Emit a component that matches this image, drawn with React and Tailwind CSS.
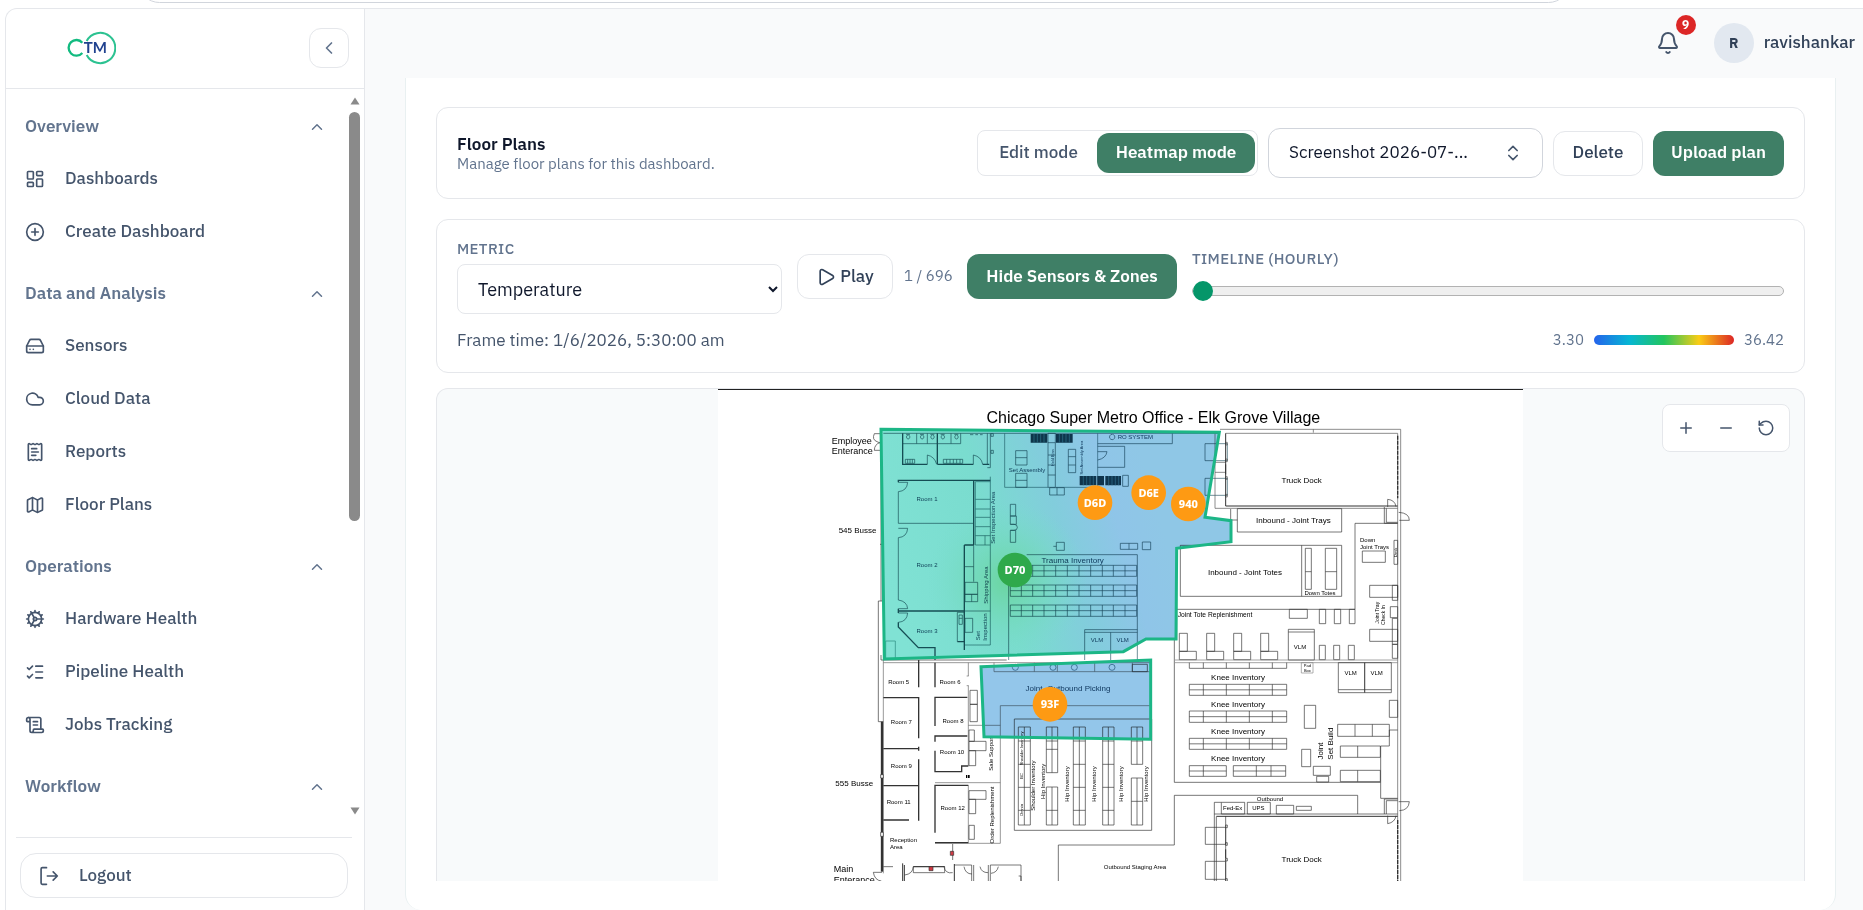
import {
  LayoutDashboard, CirclePlus, HardDrive, Cloud, ReceiptText, Map as MapIcon, Cog, ListChecks,
  ScrollText, ChevronUp, ChevronLeft, ChevronsUpDown, Bell, Play, Plus, Minus, RotateCcw,
} from "lucide-react";

const sections = [
  { title: "Overview", items: [["Dashboards", LayoutDashboard], ["Create Dashboard", CirclePlus]] },
  { title: "Data and Analysis", items: [["Sensors", HardDrive], ["Cloud Data", Cloud], ["Reports", ReceiptText], ["Floor Plans", MapIcon]] },
  { title: "Operations", items: [["Hardware Health", Cog], ["Pipeline Health", ListChecks], ["Jobs Tracking", ScrollText]] },
  { title: "Workflow", items: [] },
];

function Logo() {
  return (
    <svg viewBox="0 0 150 102" className="h-[34px] w-[50px]" role="img" aria-label="CTM">
      <g fill="none">
        <path d="M49 35A23.500 23.500 0 1 0 49 66" stroke="#12bb80" strokeWidth="7" />
        <path d="M62 30A45.500 45.500 0 1 1 62 72" stroke="#2cc291" strokeWidth="6" />
      </g>
      <text x="88" y="67" textAnchor="middle" fontFamily="Lato, sans-serif" fontSize="45" fontWeight="700" fill="#21428f">TM</text>
    </svg>
  );
}

function Sidebar() {
  return (
    <aside className="flex w-[360px] shrink-0 flex-col overflow-hidden rounded-tl-xl border border-b-0 border-gray-200 bg-white">
      <div className="flex h-20 shrink-0 items-center justify-between border-b border-gray-200 pr-[15px] pb-[2px] pl-[60px]">
        <Logo />
        <button type="button" aria-label="Collapse sidebar" className="flex size-10 items-center justify-center rounded-xl border border-gray-200 text-slate-500">
          <ChevronLeft size={20} strokeWidth={2} />
        </button>
      </div>
      <div className="flex min-h-0 flex-1">
        <nav className="flex min-w-0 flex-1 flex-col gap-[14px] overflow-hidden pt-[14px] pl-[19px]">
          {sections.map((s) => (
            <section key={s.title}>
              <button type="button" className="flex h-12 w-full items-center justify-between pr-[19px] text-[17px] font-semibold text-slate-500">
                {s.title}
                <ChevronUp size={18} strokeWidth={2} />
              </button>
              {s.items.length > 0 && (
                <ul className="mt-1 flex flex-col gap-[5px]">
                  {s.items.map(([label, Icon]) => (
                    <li key={label}>
                      <a href="#" className="flex h-12 items-center gap-5 text-[17px] font-medium text-slate-600">
                        <Icon size={20} strokeWidth={2} />
                        {label}
                      </a>
                    </li>
                  ))}
                </ul>
              )}
            </section>
          ))}
        </nav>
        <div className="flex w-[19px] shrink-0 flex-col items-center pt-2" aria-hidden="true">
          <svg viewBox="0 0 10 8" className="h-2 w-[10px]"><path d="M5 0.5 9.5 7.5H.5Z" fill="#8a8a8a" /></svg>
          <div className="mt-[7px] h-[409px] w-[11px] rounded-full bg-[#8a8a8a]" />
          <svg viewBox="0 0 10 8" className="mt-auto h-2 w-[10px]"><path d="M5 7.5 9.5.5H.5Z" fill="#8a8a8a" /></svg>
        </div>
      </div>
      <div className="mr-3 ml-[10px] mt-[22px] border-t border-gray-200 px-1 pt-[15px] pb-3">
        <button type="button" className="flex h-[45px] w-full items-center gap-5 rounded-2xl border border-gray-200 px-[18px] text-[17px] font-medium text-slate-600">
          <svg viewBox="0 0 24 24" className="size-5" fill="none" stroke="currentColor" strokeWidth="2" strokeLinecap="round" strokeLinejoin="round">
            <path d="M9 2H4a1.500 1.500 0 0 0-1.500 1.500v17A1.500 1.500 0 0 0 4 22h5M10 12h12M17 7l5 5-5 5" />
          </svg>
          Logout
        </button>
      </div>
    </aside>
  );
}

function TopBar() {
  return (
    <header className="flex h-[69px] shrink-0 items-center justify-end gap-[34px] pr-2 pb-[2px]">
      <button type="button" aria-label="Notifications, 9 unread" className="relative text-slate-600">
        <Bell size={24} strokeWidth={2} />
        <span className="absolute -top-4 -right-4 flex size-5 items-center justify-center rounded-full bg-[#dc2626] text-xs font-bold text-white">9</span>
      </button>
      <button type="button" className="flex items-center gap-[10px] text-[17px] font-medium text-slate-700">
        <span className="flex size-10 items-center justify-center rounded-full bg-slate-200 text-sm font-bold">R</span>
        ravishankar
      </button>
    </header>
  );
}

const outline = "h-[45px] rounded-xl border border-gray-200 bg-white text-[17px] font-medium text-slate-700";
const solid = "h-[45px] rounded-xl bg-[#3f7f66] text-[17px] font-semibold text-white";

function PlanHeader() {
  return (
    <section className="flex items-center justify-between rounded-xl border border-gray-200 px-5 py-5">
      <div className="pt-[2px]">
        <h1 className="text-[17px]/5 font-semibold text-slate-900">Floor Plans</h1>
        <p className="text-[15px]/5 text-slate-500">Manage floor plans for this dashboard.</p>
      </div>
      <div className="flex items-center gap-[10px]">
        <div className="flex rounded-lg border border-gray-200 p-[2px]">
          <button type="button" className="h-10 w-[117px] text-[17px] font-medium text-slate-600">Edit mode</button>
          <button type="button" className="h-10 w-[158px] rounded-xl bg-[#3f7f66] text-[17px] font-semibold text-white">Heatmap mode</button>
        </div>
        <div className="relative">
          <select aria-label="Floor plan" className="h-[50px] w-[275px] appearance-none rounded-xl border border-gray-300 bg-white pr-12 pl-5 text-[17px] text-slate-900">
            <option>Screenshot 2026-07-...</option>
          </select>
          <ChevronsUpDown size={20} strokeWidth={2} className="pointer-events-none absolute top-[15px] right-5 text-slate-600" />
        </div>
        <button type="button" className={outline + " w-[90px]"}>Delete</button>
        <button type="button" className={solid + " w-[131px]"}>Upload plan</button>
      </div>
    </section>
  );
}

function Controls() {
  return (
    <section className="mt-5 rounded-xl border border-gray-200 px-5 pt-[19px] pb-5">
      <div className="flex items-center gap-[15px]">
        <div className="flex w-[325px] flex-col gap-[5px]">
          <label htmlFor="metric" className="text-[15px]/5 font-medium tracking-wide text-slate-500">METRIC</label>
          <select id="metric" className="h-[50px] rounded-lg border border-gray-200 bg-white pl-4 text-lg text-slate-900">
            <option>Temperature</option>
          </select>
        </div>
        <button type="button" className={outline + " flex w-24 items-center justify-center gap-1"}>
          <Play size={20} strokeWidth={2} />
          Play
        </button>
        <span className="-mx-1 w-[52px] text-[15px] whitespace-nowrap text-slate-500">1 / 696</span>
        <button type="button" className={solid + " w-[210px]"}>Hide Sensors &amp; Zones</button>
        <div className="flex flex-1 flex-col gap-3 pb-1">
          <label htmlFor="timeline" className="text-[15px]/5 font-medium tracking-wide text-slate-500">TIMELINE (HOURLY)</label>
          <input
            id="timeline" type="range" min="1" max="696" defaultValue="1"
            className="h-5 w-full appearance-none bg-transparent [&::-webkit-slider-runnable-track]:h-[10px] [&::-webkit-slider-runnable-track]:rounded-full [&::-webkit-slider-runnable-track]:border [&::-webkit-slider-runnable-track]:border-[#b2b2b2] [&::-webkit-slider-runnable-track]:bg-[#efefef] [&::-webkit-slider-thumb]:-mt-[6px] [&::-webkit-slider-thumb]:size-5 [&::-webkit-slider-thumb]:appearance-none [&::-webkit-slider-thumb]:rounded-full [&::-webkit-slider-thumb]:bg-[#059669]"
          />
        </div>
      </div>
      <div className="mt-[14px] flex items-center justify-between">
        <p className="text-[17px]/6 text-slate-600">Frame time: 1/6/2026, 5:30:00 am</p>
        <div className="flex items-center gap-[10px] text-[15px] text-slate-500">
          3.30
          <div className="h-[10px] w-[140px] rounded-full bg-[linear-gradient(90deg,#2563eb,#06b6d4_25%,#22c55e_50%,#facc15_75%,#dc2626)]" />
          36.42
        </div>
      </div>
    </section>
  );
}

/* Floor plan: three drawing units to one pixel, in four quadrants. */
const rects = (list) => list.map(([x, y, w, h]) => `M${x} ${y}h${w}v${h}h${-w}z`).join("");
const shelf = (xs, y, h) =>
  `M${xs[0]} ${y}H${xs[xs.length - 1]}M${xs[0]} ${y + h / 2}H${xs[xs.length - 1]}M${xs[0]} ${y + h}H${xs[xs.length - 1]}` +
  xs.map((x) => `M${x} ${y}v${h}`).join("");
const rack = (x, w, ys) =>
  `M${x} ${ys[0]}V${ys[ys.length - 1]}M${x + w / 2} ${ys[0]}V${ys[ys.length - 1]}M${x + w} ${ys[0]}V${ys[ys.length - 1]}` +
  ys.map((y) => `M${x} ${y}h${w}`).join("");

function T({ x, y, s = 18, mid, up, fill, children }) {
  return (
    <text x={x} y={y} fontSize={s} fill={fill} textAnchor={mid || up ? "middle" : "start"} transform={up ? `rotate(-90 ${x} ${y})` : undefined}>
      {children}
    </text>
  );
}

function TopLeft() {
  const cols = [571, 604, 638, 672, 707, 742, 777, 812, 847, 880, 915, 950];
  return (
    <g>
      <g stroke="#2a5866" fill="none" strokeWidth="2">
        <path d="M190 145H1200M248 176H422M290 145v31M322 145v31M393 145v31M422 145v31M502 145V238M511 145V248H502" />
        <path d="M322 238v-28q22 5 28 28M460 238v-28q24 5 28 28M450 149h10M466 149h8M480 149h8M513 146h7v8h-7zM513 196h7v9h-7z" />
        <path d="M256 223h28v12h-28zM263 223v12M270 223v12M277 223v12M370 223h58v12h-58zM380 223v12M390 223v12M400 223v12M410 223v12M420 223v12" />
        <path d="M258 148h12M264 150a5 6 0 1 0 1 0M300 148h12M306 150a5 6 0 1 0 1 0M331 148h12M337 150a5 6 0 1 0 1 0M362 148h12M368 150a5 6 0 1 0 1 0M403 148h12M409 150a5 6 0 1 0 1 0" />
        <path d="M511 275V780H433M466 290h45M466 343h45M466 372h45M466 397h45M466 425h45M466 452h45M466 480h45M495 452v28M466 290V480" stroke="#34707a" />
        <path d="M235 292h28q-2 26-28 28V415H461M235 430h28q-2 26-28 28V645q26 4 28 26H235M235 684h28q-2 26-28 28" />
        <path d="M461 480V590M433 545h28M435 592h38v36h-38zM435 628h38v22h-38zM455 628v22M412 682h21v88M412 682v88M417 690h10v28h-10zM417 700h10M435 700h23v42h-23zM433 678h78" />
        <path d="M197 768h29v55h-29z" stroke="#4f9a96" />
        <path d="M554 145V307H684M708 307H833V145" stroke="#40727f" />
        <path d={rects([[587, 197, 34, 43], [587, 265, 34, 42], [684, 145, 22, 162], [745, 193, 22, 70], [689, 308, 44, 22], [571, 358, 16, 35], [571, 393, 18, 25], [571, 436, 16, 36], [709, 472, 24, 24], [901, 475, 52, 18], [967, 471, 25, 23], [908, 271, 17, 33], [1155, 176, 67, 51], [1155, 280, 67, 51]])} />
        <path d="M587 218h34M587 286h34M684 173h22M684 210h22M684 240h22M684 270h22M745 215h22M745 240h22M711 308v22M571 418h11a10 9 0 0 1 0 18h-11M927 475v18M700 484h9" />
        <path d="M833 176H1057V145M833 184H914V247H833M833 200h28q-3 20-28 25M876 148a8 8 0 1 0 1 0" />
        <path d="M620 509H952V825M566 600V825" />
        <path d={shelf(cols, 541, 33) + shelf(cols, 600, 34) + shelf(cols, 660, 34)} />
        <path d="M794 825V734H952M794 742H952M872 742V825" />
        <path d="M248 145V238H322M352 145V238M352 238H460M488 238h20M235 286H511M235 284v8M461 284V480M433 480H461M433 480V795M235 678H433M235 712V726L295 788H345V825M412 770h21M235 671v13" strokeWidth="4" />
      </g>
      <g fill="#1d4a6a">
        <path d="M632 147h50v26h-50zM708 147h50v26h-50zM779 273h50v28h-50zM832 273h20v28h-20zM856 273h47v28h-47z" fill="#1a4356" />
        <path d="M642 147v26M652 147v26M662 147v26M672 147v26M718 147v26M728 147v26M738 147v26M748 147v26M790 273v28M800 273v28M810 273v28M820 273v28M866 273v28M876 273v28M886 273v28M896 273v28" stroke="#58919f" strokeWidth="2" />
        <T x={321} y={347} mid>Room 1</T>
        <T x={321} y={546} mid>Room 2</T>
        <T x={321} y={744} mid>Room 3</T>
        <T x={524} y={398} up>Set Inspection Area</T>
        <T x={504} y={600} up>Shipping Area</T>
        <T x={480} y={752} up>Set</T>
        <T x={500} y={726} up>Inspection</T>
        <T x={621} y={260} mid>Set Assembly</T>
        <T x={788} y={218} s={12} up>Set Assembly Area</T>
        <T x={703} y={218} s={12} up>Hold Bins</T>
        <T x={893} y={163}>RO SYSTEM</T>
        <T x={758} y={533} s={24} mid>Trauma Inventory</T>
        <T x={831} y={770} mid>VLM</T>
        <T x={908} y={770} mid>VLM</T>
      </g>
      <g fill="#000">
        <T x={1000} y={113} s={48} mid>Chicago Super Metro Office - Elk Grove Village</T>
        <T x={35} y={176} s={27}>Employee</T>
        <T x={35} y={207} s={27}>Enterance</T>
        <T x={56} y={443} s={24}>545 Busse</T>
      </g>
      <path d="M163 146h20M163 146q-8 18 8 24q8 3 10 5M181 172q-18 6-18 24h20M183 140V648M180 478h8M175 1010V648H190M175 1010h15M183 810V825H560" fill="none" stroke="#333" strokeWidth="2" />
    </g>
  );
}

function TopRight() {
  return (
    <g transform="translate(900 0)">
      <g fill="none" stroke="#333" strokeWidth="2">
        <path d="M300 133H842V1490M317 145H833V1490M580 133v10M285 145V370H833M285 232h32M285 262h32M317 172h5v8h-5zM317 222h5v8h-5zM317 275h5v8h-5zM317 328h5v8h-5z" stroke="#555" />
        <path d="M317 145V363H833M317 238v30" strokeWidth="3" />
        <path d="M833 152V340" strokeWidth="4" strokeDasharray="12 3" />
        <path d="M803 366V343q22 2 25 22M836 382q32 2 32 24h-30M793 366V415H833M799 370V412H833M705 415H833M705 415V673H170M332 372V405H352" />
        <path d={rects([[352, 371, 313, 70], [181, 481, 484, 153], [556, 490, 18, 123], [616, 490, 34, 123], [727, 498, 69, 34], [822, 466, 11, 72], [749, 601, 84, 36], [817, 601, 16, 45], [811, 665, 22, 33], [749, 733, 84, 36], [817, 700, 16, 78], [817, 778, 16, 42], [508, 673, 54, 27], [598, 673, 19, 43], [643, 673, 19, 43], [688, 673, 17, 43], [598, 781, 18, 43], [641, 781, 18, 43], [685, 781, 18, 43], [505, 733, 78, 92], [178, 745, 24, 54], [178, 799, 51, 25], [260, 745, 24, 54], [260, 799, 51, 25], [341, 745, 24, 54], [341, 799, 51, 25], [422, 745, 24, 54], [422, 799, 51, 25]])} />
        <path d="M545 481V634M556 560h18M616 560h34M505 741h78M163 765V1192M170 490V765" />
        <path d="M165 825H833M165 833H833" stroke="#777" />
      </g>
      <T x={545} y={293} s={24} mid>Truck Dock</T>
      <T x={520} y={415} s={24} mid>Inbound - Joint Trays</T>
      <T x={375} y={569} s={24} mid>Inbound - Joint Totes</T>
      <T x={600} y={631} mid>Down Totes</T>
      <T x={720} y={472}>Down</T>
      <T x={720} y={492}>Joint Trays</T>
      <T x={776} y={683} s={15} up>Joint Tray</T>
      <T x={795} y={690} s={15} up>Check In</T>
      <T x={831} y={502} s={12} up>Desk</T>
      <T x={173} y={697} s={20}>Joint Tote Replenishment</T>
      <T x={540} y={793} mid>VLM</T>
    </g>
  );
}

function BottomLeft() {
  return (
    <g transform="translate(0 765)">
      <g fill="none" stroke="#333" strokeWidth="2">
        <path d="M190 68H993M190 60V700M445 68V108M440 108h6M445 137V378M440 137h6M445 256H541M345 428H541M541 610V197H993M345 610H541M445 436V608M522 68V95H993M643 68v27M712 68v27M824 68v27M937 68v27" stroke="#666" />
        <path d="M583 237H995V571H583ZM715 723V615H1063M398 612V660" />
        <path d="M577 82a9 9 0 1 0 18 0a9 9 0 1 0-18 0M690 82a9 9 0 1 0 18 0a9 9 0 1 0-18 0M754 82a9 9 0 1 0 18 0a9 9 0 1 0-18 0M867 82a9 9 0 1 0 18 0a9 9 0 1 0-18 0" stroke="#33667f" />
        <path d={rects([[450, 151, 22, 42], [450, 193, 22, 52], [447, 270, 16, 34], [447, 304, 51, 28], [447, 332, 20, 45], [447, 452, 51, 26], [447, 478, 20, 43], [447, 556, 16, 42], [937, 73, 45, 22]])} />
        <path d={rack(595, 36, [261, 303, 373, 442, 511, 555]) + rack(679, 34, [261, 303, 328, 398]) + rack(679, 34, [441, 511, 555]) + rack(760, 36, [261, 303, 373, 442, 511, 555]) + rack(848, 34, [261, 303, 373, 442, 511, 555]) + rack(934, 34, [261, 303, 373]) + rack(934, 34, [414, 484, 555])} />
        <path d="M345 142V68M345 258V172H442M345 305V288H442M345 332V395H425V378H445M345 578V436H445M296 60V142M190 173H296V295M190 326H296M296 320v12M296 358V542M190 437H296M190 540h77M345 608h100" strokeWidth="4" stroke="#333" />
        <path d="M186 245V695" strokeWidth="7" />
        <path d="M182 404h8v10h-8zM182 577h8v12h-8z" fill="#fff" />
        <path d="M160 697h26M160 697q4 24 24 26M190 680h29M280 680h94v18h-94zM280 680q-2 22-26 25M372 680q4 22 26 18M432 680q4 22 24 22M403 675h52M455 675V723M461 675V723M480 680q4 18 24 18M505 675V723M511 675V723M535 680q-4 18-22 20M511 675h92V723M596 708h7v15" />
        <path d="M248 670V723M253 675V723M280 680h94M403 672V723" strokeWidth="3" />
        <path d="M327 680h12v12h-12zM391 634h10v12h-10z" stroke="#333" fill="#d13a44" />
      </g>
      <path d="M438 405h4v9h-4zM444 405h5v9h-5z" />
      <T x={236} y={133} mid>Room 5</T>
      <T x={244} y={253} mid>Room 7</T>
      <T x={244} y={384} mid>Room 9</T>
      <T x={236} y={492} mid>Room 11</T>
      <T x={390} y={133} mid>Room 6</T>
      <T x={399} y={248} mid>Room 8</T>
      <T x={396} y={343} mid>Room 10</T>
      <T x={398} y={511} mid>Room 12</T>
      <T x={210} y={606}>Reception</T>
      <T x={210} y={627}>Area</T>
      <T x={46} y={438} s={24}>555 Busse</T>
      <T x={41} y={696} s={27}>Main</T>
      <T x={41} y={728} s={27}>Enterance</T>
      <T x={520} y={340} up>Sale Support</T>
      <T x={521} y={525} up>Order Replenishment</T>
      <T x={610} y={325} s={12} up>Shoulder Inventory</T>
      <T x={610} y={408} s={12} up>BC</T>
      <T x={610} y={510} s={12} up>Omnia</T>
      <T x={645} y={437} up>Shoulder Inventory</T>
      <T x={675} y={424} up>Hip Inventory</T>
      <T x={748} y={432} up>Hip Inventory</T>
      <T x={827} y={432} up>Hip Inventory</T>
      <T x={909} y={432} up>Hip Inventory</T>
      <T x={983} y={432} up>Hip Inventory</T>
      <T x={744} y={153} s={24} fill="#1d4a6a" mid>Joint- Outbound Picking</T>
      <T x={945} y={687} mid>Outbound Staging Area</T>
    </g>
  );
}

function BottomRight() {
  const cols = [208, 250, 319, 388, 457, 500];
  return (
    <g transform="translate(900 765)">
      <g fill="none" stroke="#333" strokeWidth="2">
        <path d={shelf(cols, 133, 33) + shelf(cols, 213, 34) + shelf(cols, 295, 33) + shelf([208, 250, 319], 377, 32) + shelf([340, 409, 453, 497], 377, 32)} />
        <path d="M208 68v17H500V68M250 68v17M319 68v17M388 68v17M457 68v17M163 427H782M163 615V466H713V522M655 149h159M705 253v36M757 253v36M713 318v34M713 391v34" />
        <path d={rects([[655, 68, 79, 90], [734, 68, 80, 90], [553, 196, 34, 69], [545, 328, 27, 52], [580, 379, 51, 27], [590, 409, 36, 17], [808, 181, 25, 51], [653, 253, 155, 36], [661, 318, 120, 34], [661, 391, 120, 34], [304, 487, 70, 35], [382, 487, 69, 35], [469, 496, 52, 26], [529, 499, 45, 12], [256, 562, 61, 51], [256, 664, 61, 54], [317, 555, 5, 8], [317, 608, 5, 8], [317, 655, 5, 8], [317, 716, 5, 8]])} />
        <path d="M544 68h35v31h-35z" stroke="#888" />
        <path d="M808 270h25M808 270V318H782V475H833M283 723V487H304M283 522H833M289 530V723M317 528V723M793 522V477H833M799 522V482H833M836 485h32q-2 26-30 27M803 527V551q22-4 25-24" />
        <path d="M289 529H833M317 628v26" strokeWidth="3" />
        <path d="M833 540V723" strokeWidth="4" strokeDasharray="12 3" />
      </g>
      <T x={354} y={120} s={24} mid>Knee Inventory</T>
      <T x={354} y={201} s={24} mid>Knee Inventory</T>
      <T x={354} y={282} s={24} mid>Knee Inventory</T>
      <T x={354} y={363} s={24} mid>Knee Inventory</T>
      <T x={562} y={81} s={12} mid>Pad</T>
      <T x={562} y={95} s={12} mid>Box</T>
      <T x={692} y={105} mid>VLM</T>
      <T x={770} y={105} mid>VLM</T>
      <T x={610} y={333} s={24} up>Joint</T>
      <T x={640} y={311} s={24} up>Set Build</T>
      <T x={450} y={483} mid>Outbound</T>
      <T x={338} y={511} mid>Fed-Ex</T>
      <T x={415} y={511} mid>UPS</T>
      <T x={545} y={666} s={24} mid>Truck Dock</T>
    </g>
  );
}

const sensors = [
  ["D6D", 825, 353, "#fe9a13"], ["D6E", 986, 323, "#fe9a13"], ["940", 1105, 357, "#fe9a13"],
  ["D70", 585, 555, "#2fa94b"], ["93F", 690, 958, "#fe9a13"],
];
const zoneA = "M183 133L1198 142L1155 397L1233 407V470L1070 490L1068 762H978L910 800L193 822Z";
const zoneB = "M483 845L992 825V1063L492 1055Z";

function FloorPlan() {
  return (
    <svg viewBox="-306 12 2415 1476" className="block h-[492px] w-[805px] shrink-0 bg-white" fontFamily="'Liberation Sans', Arial, sans-serif" role="img" aria-label="Floor plan heatmap">
      <defs>
        <linearGradient id="heat" gradientUnits="userSpaceOnUse" x1="190" y1="560" x2="1000" y2="330">
          <stop offset="0" stopColor="#80e2d4" />
          <stop offset="0.400" stopColor="#7adccf" />
          <stop offset="0.650" stopColor="#82cddc" />
          <stop offset="0.850" stopColor="#8fc5e8" />
          <stop offset="1" stopColor="#8fc7e6" />
        </linearGradient>
        <radialGradient id="warm" gradientUnits="userSpaceOnUse" cx="560" cy="590" r="240">
          <stop offset="0" stopColor="#6bd5a0" />
          <stop offset="0.450" stopColor="#72d9b8" stopOpacity="0.700" />
          <stop offset="1" stopColor="#78dccb" stopOpacity="0" />
        </radialGradient>
      </defs>
      <TopLeft />
      <TopRight />
      <BottomLeft />
      <BottomRight />
      <g className="mix-blend-multiply">
        <path d={zoneA} fill="url(#heat)" />
        <path d={zoneA} fill="url(#warm)" />
        <path d={zoneB} fill="#93c6ea" />
      </g>
      <path d={zoneA + zoneB} fill="none" stroke="#1cb686" strokeWidth="9" />
      <path d="M-306 13.500H2109" stroke="#222" strokeWidth="3" />
      {sensors.map(([id, x, y, color]) => (
        <g key={id}>
          <circle cx={x} cy={y} r="52" fill={color} />
          <text x={x} y={y + 12} textAnchor="middle" fontFamily="'Noto Sans', sans-serif" fontWeight="800" fontSize="33" fill="#fff">{id}</text>
        </g>
      ))}
    </svg>
  );
}

const zoomButton = "flex size-10 items-center justify-center";

function MapPanel() {
  return (
    <section className="relative mt-[15px] flex min-h-0 flex-1 justify-center overflow-hidden rounded-t-xl border border-b-0 border-gray-200 bg-[#f8fafb]">
      <FloorPlan />
      <div className="absolute top-[15px] right-[14px] flex rounded-lg border border-gray-200 bg-white px-[3px] py-[3px] text-slate-600">
        <button type="button" aria-label="Zoom in" className={zoomButton}><Plus size={18} /></button>
        <button type="button" aria-label="Zoom out" className={zoomButton}><Minus size={18} /></button>
        <button type="button" aria-label="Reset view" className={zoomButton}><RotateCcw size={18} /></button>
      </div>
    </section>
  );
}

export default function App() {
  return (
    <div className="flex h-screen flex-col overflow-hidden bg-white font-['IBM_Plex_Sans',Roboto,sans-serif]">
      <div className="h-2 shrink-0 overflow-hidden px-[138px]" aria-hidden="true">
        <div className="-mt-10 mr-[155px] h-[43px] rounded-full border border-gray-300" />
      </div>
      <div className="flex min-h-0 flex-1 pl-[5px]">
        <Sidebar />
        <div className="flex min-w-0 flex-1 flex-col border-t border-gray-200 bg-[#f9fafb]">
          <TopBar />
          <main className="mr-[27px] ml-10 flex min-h-0 flex-1 flex-col rounded-b-2xl border-x border-[#e9f0f1] bg-white px-[30px] pt-[29px] pb-[29px]">
            <PlanHeader />
            <Controls />
            <MapPanel />
          </main>
        </div>
      </div>
    </div>
  );
}
